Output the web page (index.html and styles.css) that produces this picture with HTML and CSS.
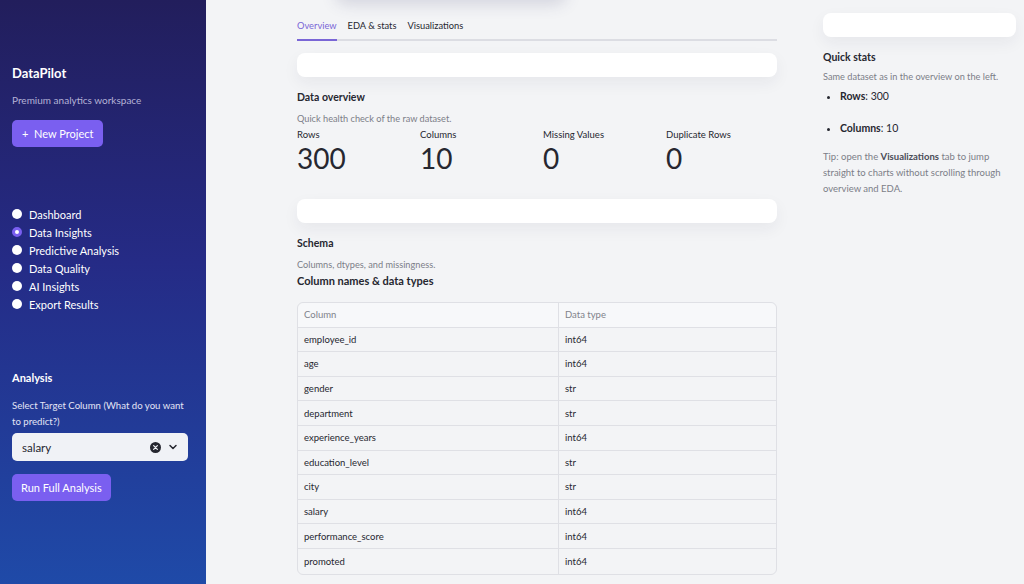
FILE: index.html
```html
<!DOCTYPE html>
<html lang="en">
<head>
    <meta charset="UTF-8">
    <meta name="viewport" content="width=device-width, initial-scale=1.0">
    <title>DataPilot - Data Insights</title>
    <link rel="stylesheet" href="styles.css">
</head>
<body>
    <div class="app">
        <aside class="sidebar">
            <h1 class="brand">DataPilot</h1>
            <p class="tagline">Premium analytics workspace</p>
            <button class="btn">+&nbsp; New Project</button>

            <ul class="nav">
                <li><span class="radio"></span>Dashboard</li>
                <li><span class="radio checked"></span>Data Insights</li>
                <li><span class="radio"></span>Predictive Analysis</li>
                <li><span class="radio"></span>Data Quality</li>
                <li><span class="radio"></span>AI Insights</li>
                <li><span class="radio"></span>Export Results</li>
            </ul>

            <h3 class="side-title">Analysis</h3>
            <label class="side-label">Select Target Column (What do you want to predict?)</label>
            <div class="select">
                <span>salary</span>
                <span class="select-icons">
                    <svg width="11" height="11" viewBox="0 0 12 12"><circle cx="6" cy="6" r="6" fill="#262730"/><path d="M4 4l4 4M8 4l-4 4" stroke="#f0f2f6" stroke-width="1.4" stroke-linecap="round"/></svg>
                    <svg width="10" height="10" viewBox="0 0 10 10"><path d="M2 3.5l3 3 3-3" fill="none" stroke="#262730" stroke-width="1.5" stroke-linecap="round" stroke-linejoin="round"/></svg>
                </span>
            </div>
            <button class="btn btn-run">Run Full Analysis</button>
        </aside>

        <main class="main">
            <div class="top-glow"></div>
            <section class="content">
                <div class="tabs">
                    <span class="tab active">Overview</span>
                    <span class="tab">EDA &amp; stats</span>
                    <span class="tab">Visualizations</span>
                </div>

                <div class="card"></div>
                <h4 class="heading">Data overview</h4>
                <p class="caption">Quick health check of the raw dataset.</p>
                <div class="metrics">
                    <div class="metric"><div class="metric-label">Rows</div><div class="metric-value">300</div></div>
                    <div class="metric"><div class="metric-label">Columns</div><div class="metric-value">10</div></div>
                    <div class="metric"><div class="metric-label">Missing Values</div><div class="metric-value">0</div></div>
                    <div class="metric"><div class="metric-label">Duplicate Rows</div><div class="metric-value">0</div></div>
                </div>

                <div class="card card-2"></div>
                <h4 class="heading">Schema</h4>
                <p class="caption">Columns, dtypes, and missingness.</p>
                <h4 class="subheading">Column names &amp; data types</h4>

                <table class="grid">
                    <thead>
                        <tr><th>Column</th><th>Data type</th></tr>
                    </thead>
                    <tbody>
                        <tr><td>employee_id</td><td>int64</td></tr>
                        <tr><td>age</td><td>int64</td></tr>
                        <tr><td>gender</td><td>str</td></tr>
                        <tr><td>department</td><td>str</td></tr>
                        <tr><td>experience_years</td><td>int64</td></tr>
                        <tr><td>education_level</td><td>str</td></tr>
                        <tr><td>city</td><td>str</td></tr>
                        <tr><td>salary</td><td>int64</td></tr>
                        <tr><td>performance_score</td><td>int64</td></tr>
                        <tr><td>promoted</td><td>int64</td></tr>
                    </tbody>
                </table>
            </section>

            <section class="side-panel">
                <div class="card card-3"></div>
                <h4 class="heading">Quick stats</h4>
                <p class="caption">Same dataset as in the overview on the left.</p>
                <ul class="stats">
                    <li><b>Rows</b>: 300</li>
                    <li><b>Columns</b>: 10</li>
                </ul>
                <p class="tip">Tip: open the <b>Visualizations</b> tab to jump straight to charts without scrolling through overview and EDA.</p>
            </section>
        </main>
    </div>
</body>
</html>
```

FILE: styles.css
```css
* { box-sizing: border-box; }
body {
    margin: 0;
    font-family: Lato, "Noto Sans", sans-serif;
    color: #262730;
    background: #f3f4f6;
}
.app {
    display: flex;
    height: 584px;
    overflow: hidden;
}

/* sidebar */
.sidebar {
    width: 206px;
    flex-shrink: 0;
    padding: 65px 18px 0 12px;
    background: linear-gradient(180deg, #221e5c 0%, #252b86 45%, #1f4aa8 100%);
    color: #fff;
}
.brand { margin: 0; font-size: 13px; font-weight: 700; line-height: 16px; }
.tagline { margin: 12px 0 0; font-size: 10px; color: #b4b2d6; line-height: 14px; }
.btn {
    display: block;
    margin-top: 13px;
    padding: 0 10px;
    height: 27px;
    border: none;
    border-radius: 5px;
    background: #7a5ff0;
    color: #fff;
    font-family: inherit;
    font-size: 11px;
}
.nav { list-style: none; margin: 58px 0 0; padding: 0; }
.nav li {
    display: flex;
    align-items: center;
    height: 18px;
    font-size: 11px;
}
.radio {
    width: 10px; height: 10px;
    border-radius: 50%;
    background: #fff;
    margin-right: 7px;
}
.radio.checked { background: #fff; border: 3.2px solid #7a5ff0; }
.side-title { margin: 58px 0 0; font-size: 11px; font-weight: 700; }
.side-label {
    display: block;
    margin-top: 14px;
    font-size: 9.6px;
    line-height: 16px;
    color: #e4e5f5;
}
.select {
    display: flex;
    align-items: center;
    justify-content: space-between;
    margin-top: 3px;
    height: 28px;
    padding: 0 10px;
    border-radius: 5px;
    background: #f0f2f6;
    color: #262730;
    font-size: 11.5px;
}
.select-icons { display: flex; align-items: center; gap: 7px; }
.select-icons svg { display: block; }
.btn-run { margin-top: 13px; padding: 0 9px; }

/* main */
.main {
    flex: 1;
    position: relative;
    display: flex;
    padding: 0 8px 0 91px;
    gap: 46px;
}
.top-glow {
    position: absolute;
    top: -30px; left: 130px;
    width: 230px; height: 30px;
    border-radius: 10px;
    box-shadow: 0 4px 16px rgba(60, 60, 110, 0.18);
}
.content { width: 480px; flex-shrink: 0; padding-top: 20px; }
.side-panel { width: 193px; padding-top: 13px; }
.tabs {
    display: flex;
    gap: 11px;
    border-bottom: 2px solid #dcdde3;
    font-size: 9.3px;
}
.tab { padding-bottom: 8px; margin-bottom: -2px; }
.tab.active { color: #7a66d6; border-bottom: 2px solid #7a66d6; }
.card {
    height: 24px;
    margin-top: 12px;
    border-radius: 8px;
    background: #fff;
    box-shadow: 0 6px 16px rgba(30, 30, 60, 0.06);
}
.card-2 { margin-top: 24px; }
.card-3 { margin-top: 0; }
.heading { margin: 12px 0 0; font-size: 10.5px; font-weight: 700; line-height: 16px; }
.caption { margin: 7px 0 0; font-size: 9.2px; color: #7c7e88; line-height: 14px; }
.subheading { margin: 1px 0 0; font-size: 11px; font-weight: 700; line-height: 16px; }
.metrics { display: flex; }
.metric { width: 123px; flex-shrink: 0; }
.metric-label { font-size: 9.5px; line-height: 13px; margin-top: 2px; }
.metric-value { font-size: 28px; line-height: 34px; }

/* table */
.grid {
    width: 100%;
    margin-top: 13px;
    border-collapse: separate;
    border-spacing: 0;
    border: 1px solid #dfe0e5;
    border-radius: 6px;
    font-size: 9.5px;
}
.grid th, .grid td {
    height: 24.6px;
    padding: 0 6px;
    text-align: left;
    border-bottom: 1px solid #dfe0e5;
}
.grid th { font-weight: 400; color: #80828b; background: #f7f8fa; border-radius: 6px 0 0 0; }
.grid th + th { border-radius: 0 6px 0 0; }
.grid td:first-child, .grid th:first-child { width: 261px; border-right: 1px solid #dfe0e5; }
.grid tr:last-child td { border-bottom: none; }

/* quick stats */
.side-panel .heading { margin-top: 12px; }
.side-panel .caption { margin-top: 5px; }
.stats { margin: 5px 0 0; padding-left: 17px; font-size: 10.5px; }
.stats li { line-height: 14px; }
.stats li + li { margin-top: 18px; }
.tip { margin: 14px 0 0; font-size: 9.5px; line-height: 16px; color: #7c7e88; }
.tip b { color: #4a4c56; }
```
